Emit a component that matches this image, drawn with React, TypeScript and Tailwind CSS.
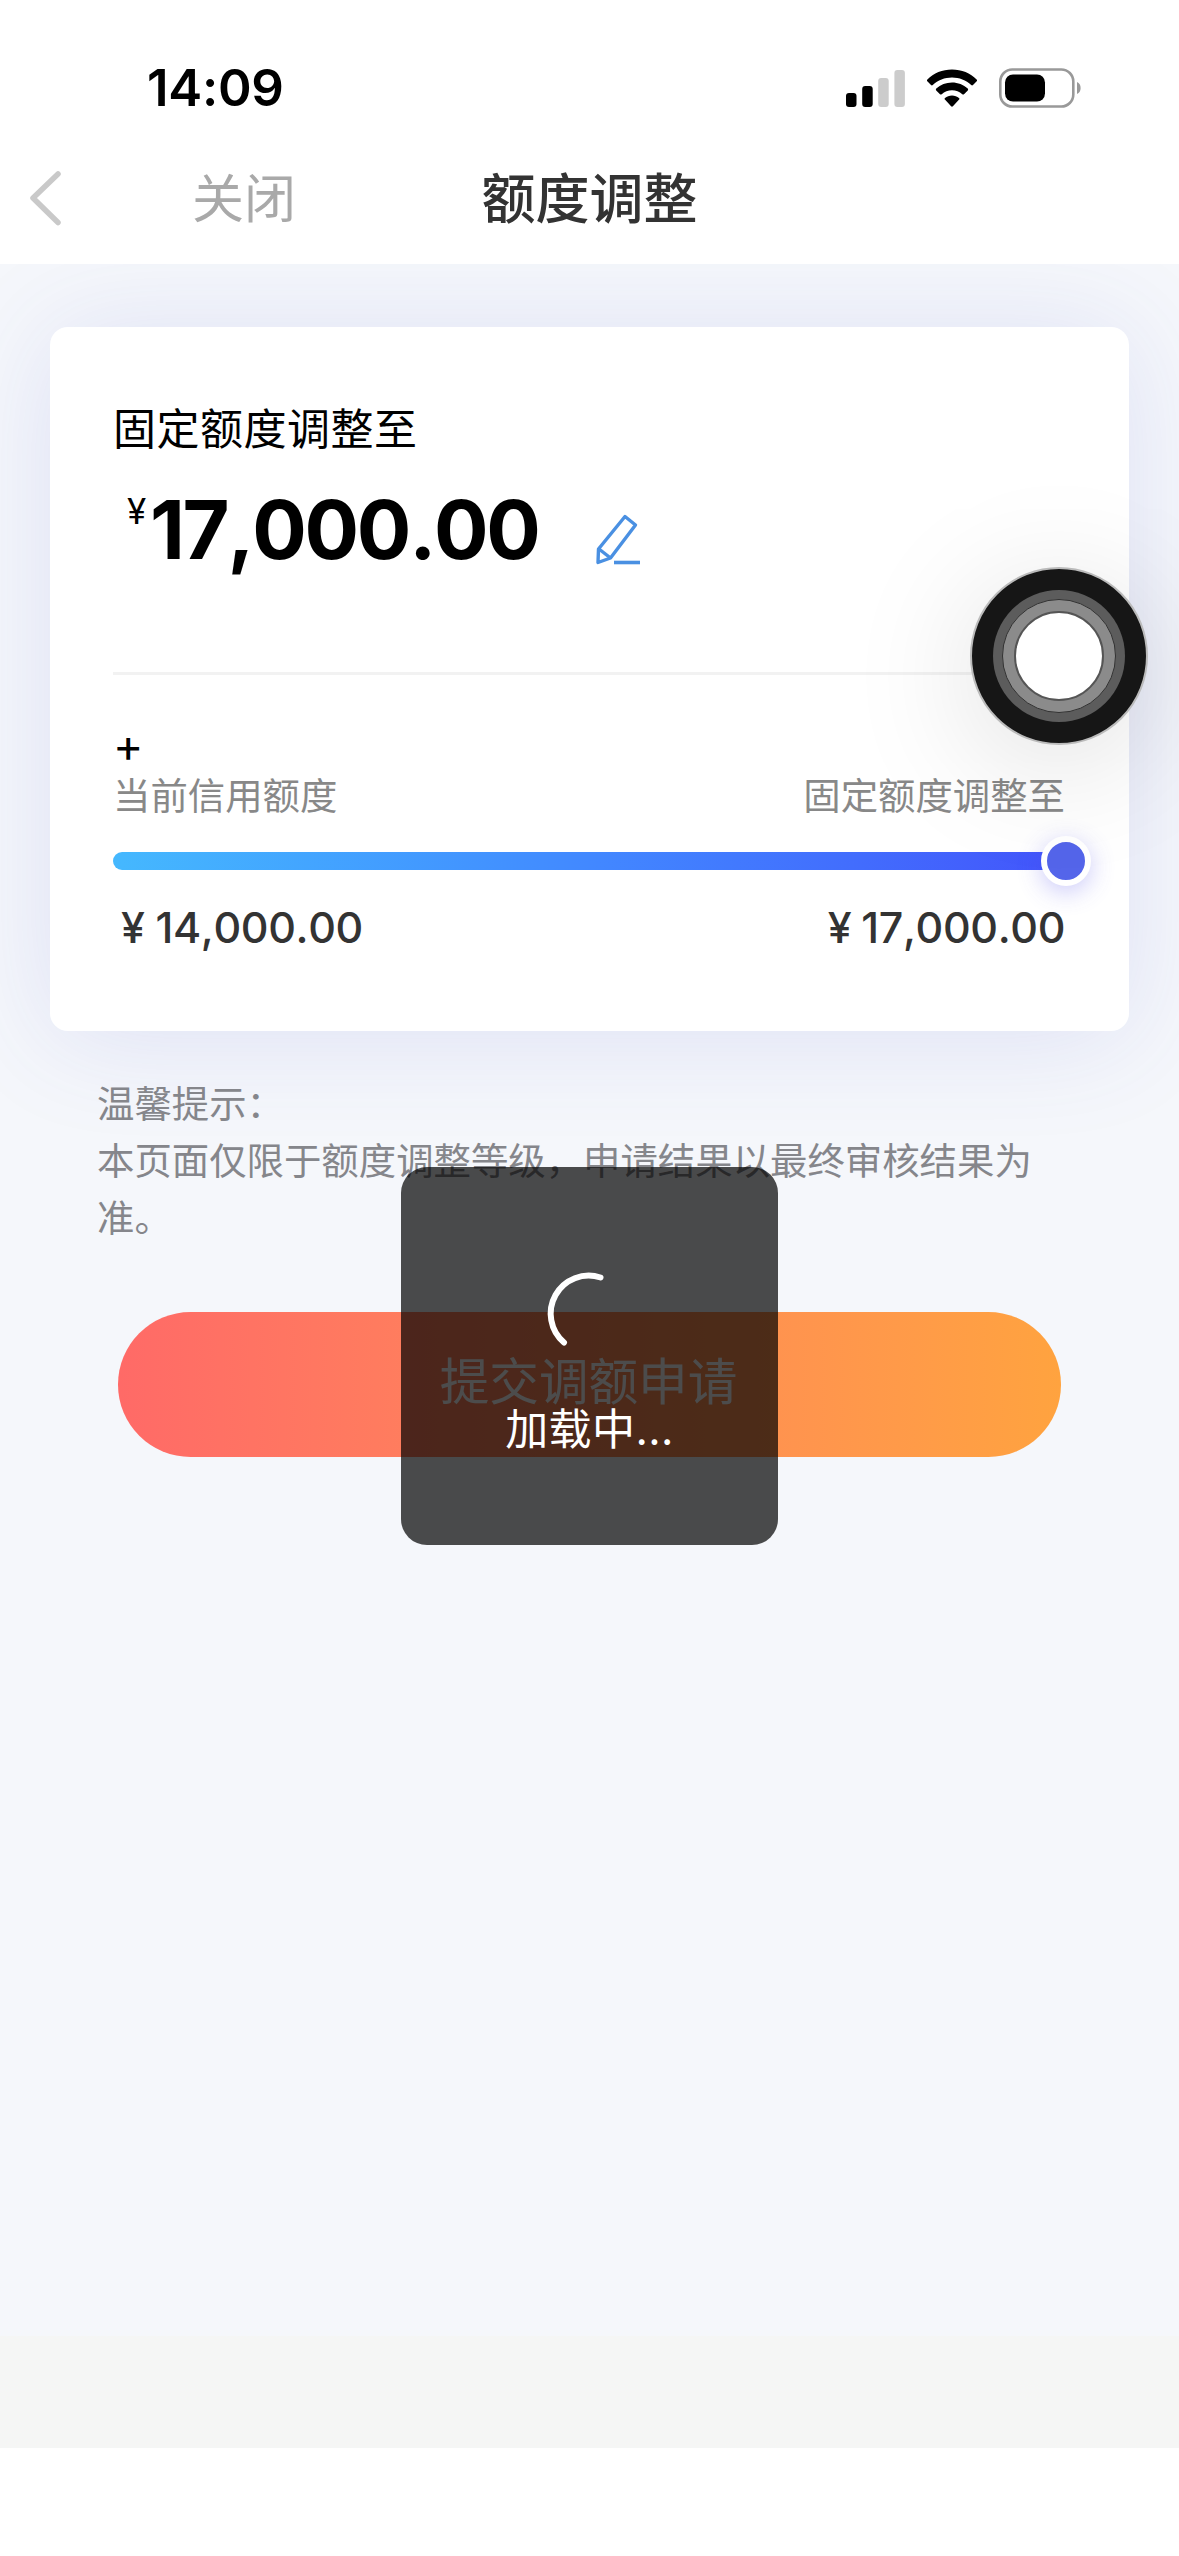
function StatusBar() {
  return (
    <div className="flex h-[136px] items-end justify-between pr-[97px] pb-[15px] pl-[147px]">
      <span className="text-[51px] leading-[66px] font-semibold tracking-[-0.3px] text-black">14:09</span>
      <div className="mb-[13px] flex items-center gap-[22px]">
        <svg className="h-[40px] w-[59px]" viewBox="0 0 59 40">
          <rect x="0" y="25" width="10.5" height="14" rx="3" fill="#000" />
          <rect x="16.2" y="18" width="10.5" height="21" rx="3" fill="#000" />
          <rect x="32.2" y="10" width="10.5" height="29" rx="3" fill="#ccc" />
          <rect x="48.4" y="2" width="10.5" height="37" rx="3" fill="#ccc" />
        </svg>
        <svg className="h-[40px] w-[50px]" viewBox="0 0 50 40">
          <path d="M25 1.5C34.6 1.5 43.4 5.2 49.6 11.4C50.2 12 50.2 12.7 49.7 13.2L46 17C45.4 17.6 44.8 17.6 44.2 17C39 12.2 32.3 9.5 25 9.5C17.7 9.5 11 12.2 5.8 17C5.2 17.6 4.6 17.6 4 17L.3 13.2C-.2 12.7 -.2 12 .4 11.4C6.6 5.2 15.4 1.5 25 1.5Z" />
          <path d="M25 14.5C31 14.5 36.5 16.8 40.7 20.6C41.3 21.2 41.3 21.8 40.8 22.4L37 26.2C36.5 26.7 35.9 26.7 35.3 26.2C32.5 23.7 28.9 22.3 25 22.3C21.1 22.3 17.5 23.7 14.7 26.2C14.1 26.7 13.5 26.7 13 26.2L9.2 22.4C8.7 21.8 8.7 21.2 9.3 20.6C13.5 16.8 19 14.5 25 14.5Z" />
          <path d="M25 27.5C27.7 27.5 30.1 28.4 32 29.9C32.6 30.4 32.6 31.1 32.1 31.6L25.9 38.3C25.3 38.9 24.7 38.9 24.1 38.3L17.9 31.6C17.4 31.1 17.4 30.4 18 29.9C19.9 28.4 22.3 27.5 25 27.5Z" />
        </svg>
        <svg className="h-[40px] w-[83px]" viewBox="0 0 83 40">
          <rect x="1.3" y="1.5" width="73" height="37" rx="12" fill="none" stroke="#999" strokeWidth="2.6" />
          <rect x="6" y="6.5" width="40" height="27" rx="8" fill="#000" />
          <path d="M78 14C82.8 15.5 82.8 24.5 78 26Z" fill="#999" />
        </svg>
      </div>
    </div>
  );
}

function NavBar() {
  return (
    <div className="grid h-[128px] grid-cols-3 items-start">
      <div className="flex items-start pl-[28px]">
        <svg className="mt-[34px] h-[56px] w-[36px]" viewBox="0 0 36 56" fill="none" stroke="#c9c9c9" strokeWidth="5.5" strokeLinecap="round" strokeLinejoin="round">
          <path d="M30 4L5 28L30 52.5" />
        </svg>
        <span className="mt-[26px] ml-[128px] text-[52px] leading-[76px] whitespace-nowrap text-[#a9a9a9]">关闭</span>
      </div>
      <h1 className="mt-[24px] text-center text-[54px] leading-[80px] font-medium whitespace-nowrap text-[#333]">额度调整</h1>
    </div>
  );
}

function PencilIcon() {
  return (
    <svg className="h-[54px] w-[48px]" viewBox="0 0 48 54" fill="none" stroke="#4a90e2" strokeWidth="3.4" strokeLinejoin="round">
      <path d="M3.5 37L30 4.5L40.5 13L15.5 46L3 50.5Z" />
      <path d="M4 37L15.5 46" />
      <path d="M19 50.5H45" strokeWidth="3.6" />
    </svg>
  );
}

function LimitCard() {
  return (
    <section className="mx-[50px] mt-[63px] h-[704px] rounded-[18px] bg-white px-[63px] pt-[72px] shadow-[0_6px_110px_rgba(70,80,200,0.13)]">
      <div className="text-[43px] leading-[60px] tracking-[0.5px] text-black">固定额度调整至</div>
      <div className="mt-[26px] flex h-[90px] items-start">
        <span className="mt-[5px] ml-[14px] w-[23px] text-[35px] leading-[42px] text-black">¥</span>
        <span className="w-[443px] text-[81px] leading-[90px] font-bold tracking-[-2.3px] text-black [font-kerning:none]">17,000.00</span>
        <div className="mt-[27px] ml-[2px]">
          <PencilIcon />
        </div>
      </div>
      <hr className="mt-[97px] h-[3px] border-0 bg-[#f2f2f2]" />
      <div className="mt-[49px] h-[46px] text-[46px] leading-[43px] text-black">+</div>
      <div className="flex h-[52px] justify-between pr-px text-[37.4px] leading-[53px] text-[#888]">
        <span>当前信用额度</span>
        <span>固定额度调整至</span>
      </div>
      <div className="relative mt-[30px] h-[18px] rounded-full bg-linear-to-r from-[#45b8fe] via-[#4288ff] to-[#4354fb]">
        <span className="absolute top-1/2 -right-[25px] size-[50px] -translate-y-1/2 rounded-full border-[6px] border-white bg-[#5465ea] shadow-[0_6px_24px_rgba(84,80,234,0.3)]" />
      </div>
      <div className="mt-[27px] flex h-[60px] justify-between pr-px text-[43px] leading-[60px] font-medium tracking-[-0.4px] text-[#333] [font-kerning:none]">
        <span className="flex gap-[11px] pl-[8px]"><span>¥</span><span>14,000.00</span></span>
        <span className="flex gap-[10px]"><span>¥</span><span>17,000.00</span></span>
      </div>
    </section>
  );
}

function LoadingToast() {
  return (
    <div className="absolute top-[1167px] left-[401px] flex h-[378px] w-[377px] flex-col items-center rounded-[26px] bg-black/70 pt-[102px]">
      <svg className="mr-[4px] h-[88px] w-[88px]" viewBox="0 0 88 88" fill="none" stroke="#fff" strokeWidth="6" strokeLinecap="round">
        <path d="M56.5 8.5A38 38 0 0 0 20 73.5" />
      </svg>
      <span className="mt-[40px] text-[43px] leading-[64px] tracking-[0.4px] text-white">加载中...</span>
    </div>
  );
}

function AssistiveTouch() {
  return (
    <div className="absolute top-[567px] left-[970px] flex size-[178px] items-center justify-center rounded-full border-2 border-[#bbb] bg-[#161616] shadow-[0_20px_130px_rgba(0,0,0,0.13)]">
      <div className="flex size-[132px] items-center justify-center rounded-full bg-[#5c5c5c]">
        <div className="flex size-[114px] items-center justify-center rounded-full border-[1.5px] border-[#333] bg-[#8b8b8b]">
          <div className="size-[90px] rounded-full border-2 border-[#555] bg-white" />
        </div>
      </div>
    </div>
  );
}

export default function App() {
  return (
    <div className="relative h-[2556px] w-[1179px] overflow-hidden bg-white font-['Inter','Noto_Sans_CJK_SC',sans-serif]">
      <header className="bg-white">
        <StatusBar />
        <NavBar />
      </header>
      <main className="flex h-[2184px] flex-col overflow-hidden bg-[#f5f7fb]">
        <LimitCard />
        <div className="mt-[45px] h-[171px] px-[97px] text-[37.4px] leading-[57px] text-[#85868b]">
          <p>温馨提示：</p>
          <p>本页面仅限于额度调整等级，申请结果以最终审核结果为<br />准。</p>
        </div>
        <button className="mx-[118px] mt-[65px] h-[145px] rounded-full bg-linear-to-r from-[#ff6a67] to-[#ffa33f] pr-[2px] pb-[5px] text-[49.6px] text-white">提交调额申请</button>
        <div className="mt-auto h-[112px] bg-[#f5f6f5]" />
      </main>
      <AssistiveTouch />
      <LoadingToast />
    </div>
  );
}
